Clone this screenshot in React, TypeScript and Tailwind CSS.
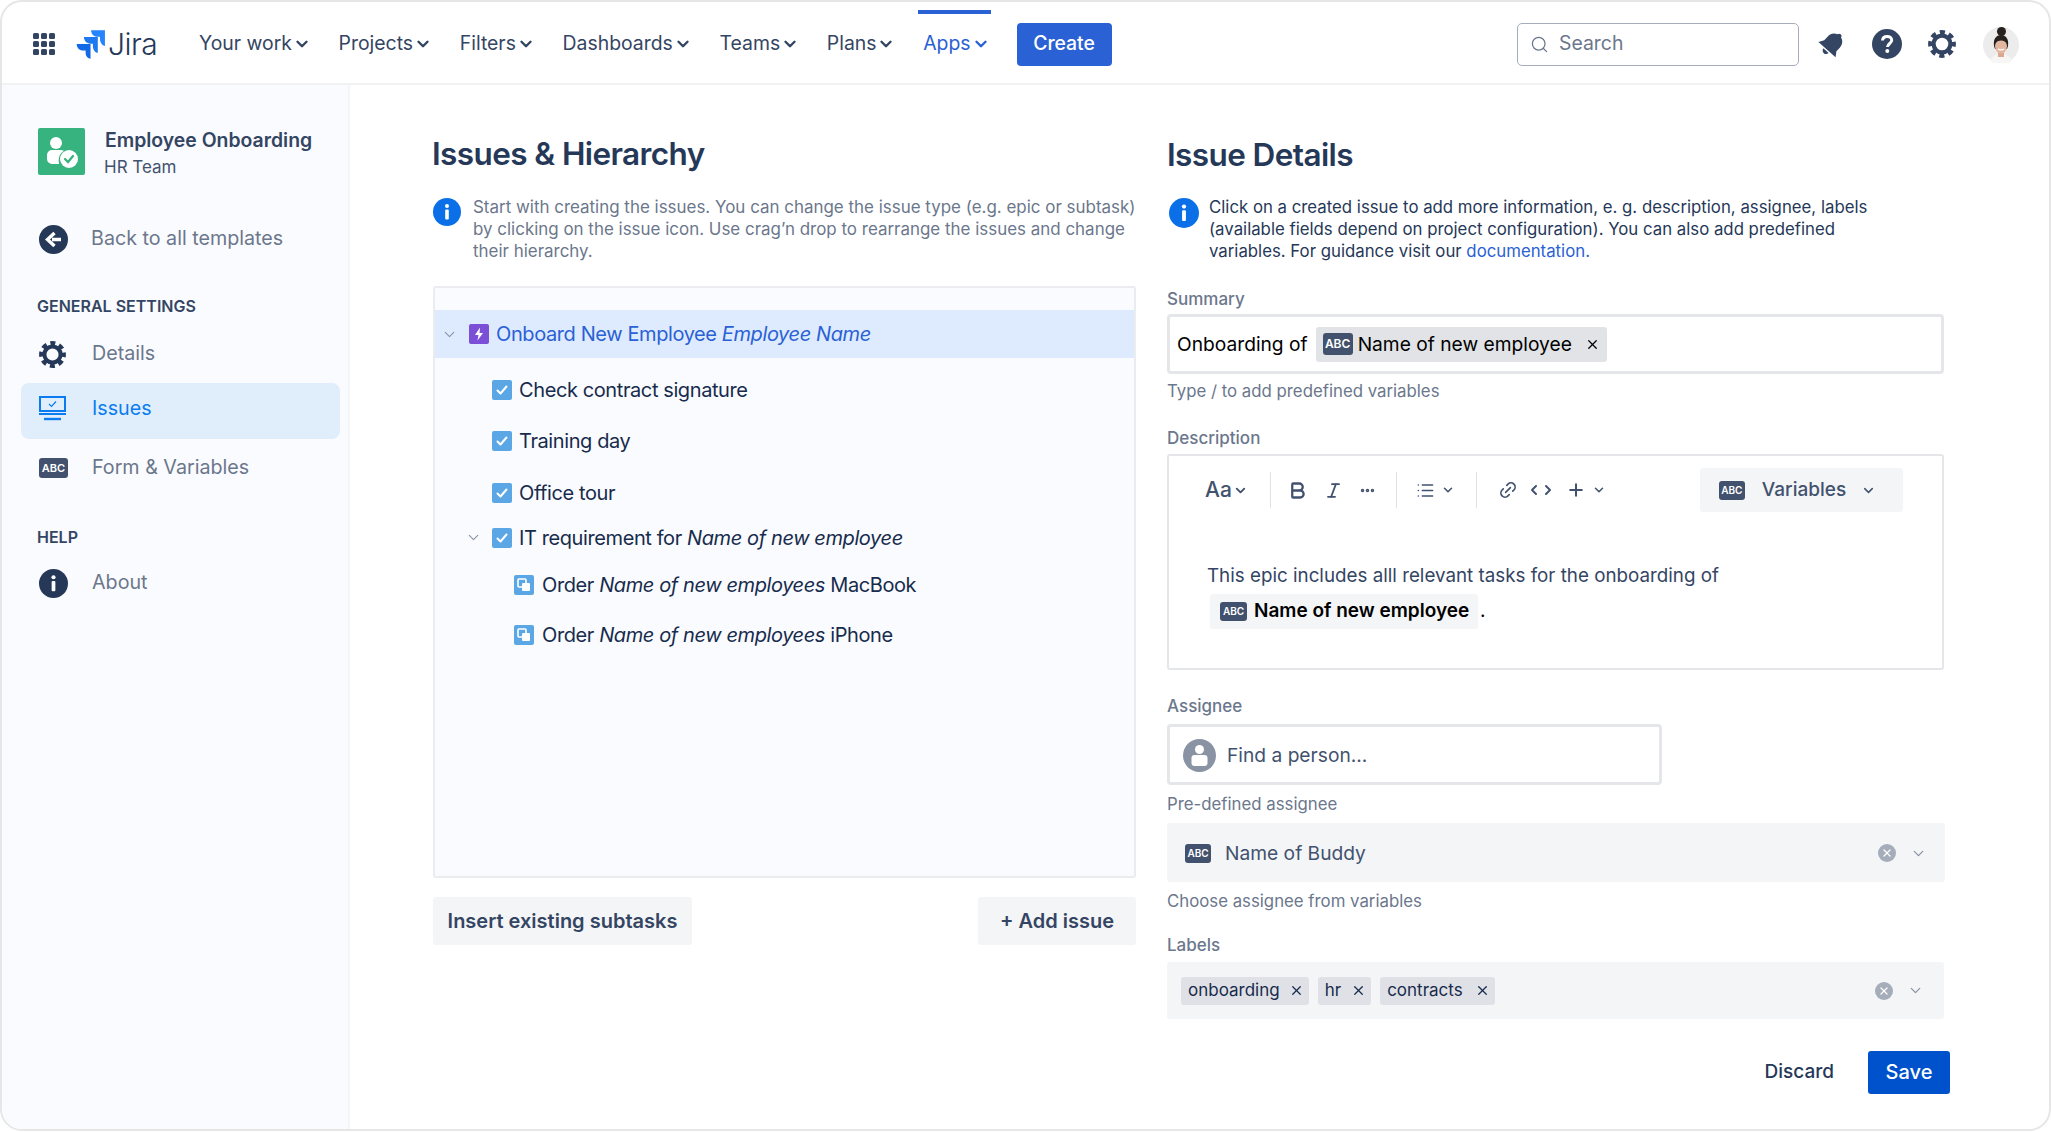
import { ChevronDown, Search, X, Bold, Italic, Link2, Plus, List, MoreHorizontal, ChevronLeft, ChevronRight } from "lucide-react";
import type { ReactNode } from "react";

const navItems = ["Your work", "Projects", "Filters", "Dashboards", "Teams", "Plans"];

function Abc({ className = "" }: { className?: string }) {
  return (
    <span className={`inline-flex items-center justify-center rounded-[3px] bg-[#42526e] font-semibold text-white shrink-0 ${className}`}>
      ABC
    </span>
  );
}

function Gear({ size = 28, color = "#253858" }: { size?: number; color?: string }) {
  return (
    <svg width={size} height={size} viewBox="0 0 28 28" fill="none">
      <circle cx="14" cy="14" r="8.4" stroke={color} strokeWidth="4.2" />
      <circle cx="14" cy="14" r="11.6" stroke={color} strokeWidth="4.6" strokeDasharray="5.1 4" strokeDashoffset="2.5" />
    </svg>
  );
}

function InfoDot({ size = 28, color = "#0b6fe8" }: { size?: number; color?: string }) {
  return (
    <svg width={size} height={size} viewBox="0 0 28 28" className="shrink-0">
      <circle cx="14" cy="14" r="14" fill={color} />
      <circle cx="14" cy="8" r="2" fill="#fff" />
      <rect x="12.2" y="11.5" width="3.6" height="10" rx="1" fill="#fff" />
    </svg>
  );
}

function CheckIcon() {
  return (
    <svg width="20" height="20" viewBox="0 0 20 20" className="shrink-0">
      <rect width="20" height="20" rx="2" fill="#5ba7e6" />
      <path d="M5.5 10.5l3 3 6-7" stroke="#fff" strokeWidth="2" fill="none" strokeLinecap="round" strokeLinejoin="round" />
    </svg>
  );
}

function SubtaskIcon() {
  return (
    <svg width="20" height="20" viewBox="0 0 20 20" className="shrink-0">
      <rect width="20" height="20" rx="2" fill="#5ba7e6" />
      <rect x="4" y="4" width="8" height="8" rx="1" fill="none" stroke="#fff" strokeWidth="1.6" />
      <rect x="8" y="8" width="8" height="8" rx="1" fill="#fff" />
    </svg>
  );
}

function TreeChevron() {
  return <ChevronDown size={17} strokeWidth={1.6} className="text-[#8993a4] shrink-0" />;
}

function TreeRow({ className, children }: { className: string; children: ReactNode }) {
  return <div className={`flex items-center text-[20px] tracking-[-0.4px] text-[#172b4d] ${className}`}>{children}</div>;
}

function NavLink({ icon, label, active }: { icon: ReactNode; label: string; active?: boolean }) {
  return (
    <div className={`flex h-[56px] items-center rounded-[8px] pl-[18px] text-[19.7px] ${active ? "bg-[#e0eefc] pb-[4px] text-[#0b7cf0]" : "text-[#6b778c]"}`}>
      <span className="flex w-[50px] justify-start">{icon}</span>
      <span className="ml-[3px]">{label}</span>
    </div>
  );
}

function Tag({ label, gap }: { label: string; gap: string }) {
  return (
    <span className={`flex h-[28px] items-center rounded-[3px] bg-[#dfe1e6] pl-[7px] pr-[5px] text-[17px] text-[#172b4d] ${gap}`}>
      {label}
      <X size={15} strokeWidth={2} />
    </span>
  );
}

function ClearAndChevron() {
  return (
    <div className="ml-auto flex items-center gap-[14px]">
      <span className="flex h-[18px] w-[18px] items-center justify-center rounded-full bg-[#a5adba] text-white">
        <X size={12} strokeWidth={2.6} />
      </span>
      <ChevronDown size={17} strokeWidth={1.8} className="text-[#8993a4]" />
    </div>
  );
}

function Separator({ className = "" }: { className?: string }) {
  return <span className={`h-[36px] w-px bg-[#dfe1e6] ${className}`} />;
}

export default function App() {
  return (
    <div className="h-[1132px] w-[2051px] overflow-hidden bg-white font-[Inter,sans-serif]">
      <div className="flex h-[1131px] flex-col overflow-hidden rounded-[22px] border-2 border-[#e6e6e6] bg-white">
        {/* top bar */}
        <header className="flex h-[83px] shrink-0 items-center border-b-2 border-[#f1f2f4] pl-[29px] pr-[30px] pt-[3px] text-[19.4px] text-[#344563]">
          <svg width="26" height="26" viewBox="0 0 26 26" fill="#344563" className="shrink-0">
            {[2, 10, 18].map((y) => [2, 10, 18].map((x) => <rect key={`${x}-${y}`} x={x} y={y} width="6" height="6" rx="1.5" />))}
          </svg>
          <svg width="32" height="30" viewBox="0 0 30 28" className="ml-[17px] shrink-0">
            <path d="M29 1H16c0 3.5 2.6 6.2 6 6.2h2.4v2.3c0 3.3 2.3 6 4.6 6.3V1z" fill="#2684ff" />
            <path d="M22.300 7.500H9.300c0 3.500 2.600 6.200 6 6.200h2.400V16c0 3.300 2.300 6 4.600 6.300V7.500z" fill="#1e78f0" />
            <path d="M15.500 14H2.500c0 3.500 2.600 6.200 6 6.200h2.400v2.300c0 3.300 2.300 5 4.600 5.300V14z" fill="#1268e6" />
          </svg>
          <span className="ml-[2px] w-[50px] text-[30px] font-light tracking-[-0.5px] text-[#253858]">Jira</span>
          <nav className="ml-[41px] flex items-center">
            {navItems.map((item) => (
              <span key={item} className="mr-[27.7px] flex items-center">
                {item}
                <ChevronDown size={18} strokeWidth={3.2} className="ml-[1px]" />
              </span>
            ))}
            <span className="relative flex h-[78px] items-center text-[#2a61d4]">
              <span className="absolute -left-[5px] -right-[1px] top-[5px] h-[4px] bg-[#2a61d4]" />
              Apps
              <ChevronDown size={18} strokeWidth={3.2} className="ml-[1px]" />
            </span>
          </nav>
          <button className="ml-[27px] h-[43px] w-[95px] rounded-[4px] bg-[#2a61d4] text-[19.4px] font-medium text-white">Create</button>
          <div className="ml-auto flex h-[43px] w-[282px] items-center rounded-[5px] border border-[#a5adba] pl-[12px] text-[#6b778c]">
            <Search size={19} strokeWidth={1.6} />
            <span className="ml-[10px]">Search</span>
          </div>
          <svg width="30" height="30" viewBox="0 0 30 30" className="ml-[18px] shrink-0" fill="#344563">
            <g transform="rotate(42 15 15)">
              <path d="M15 2c-1.400 0-2.400 1-2.400 2.200C8.800 5.200 6.800 8.600 6.800 12.500v5L3.500 22.500h23l-3.300-5v-5c0-3.900-2-7.300-5.800-8.300C17.400 3 16.400 2 15 2z" />
              <path d="M11.500 24h7c-.3 2-1.700 3.300-3.500 3.300s-3.200-1.300-3.500-3.300z" />
            </g>
          </svg>
          <svg width="30" height="30" viewBox="0 0 30 30" className="ml-[25px] shrink-0">
            <circle cx="15" cy="15" r="15" fill="#344563" />
            <path d="M10.500 11.500c.2-2.500 2.200-4 4.700-4s4.500 1.500 4.500 3.800c0 3.200-4 3.200-4.200 6.700" stroke="#fff" strokeWidth="3" fill="none" />
            <circle cx="15.300" cy="22" r="2" fill="#fff" />
          </svg>
          <span className="ml-[26px]">
            <Gear size={28} color="#344563" />
          </span>
          <svg width="36" height="38" viewBox="0 0 36 38" className="ml-[27px] shrink-0">
            <circle cx="18" cy="20" r="18" fill="#ececec" />
            <path d="M7 36c2-5 6-7 11-7s9 2 11 7a18 18 0 0 1-22 0z" fill="#f8f6f4" />
            <rect x="15" y="25" width="6" height="7" fill="#d9a88d" />
            <path d="M11 21c-1-7 2-11 7-11s8 4 7 11l-1 3H12z" fill="#26201e" />
            <ellipse cx="18" cy="21" rx="6" ry="7.500" fill="#e3b79f" />
            <path d="M12 19c0-4 2.500-6 6-6s6 2 6 6c-1.500-2.500-3.500-3.500-6-3.500s-4.500 1-6 3.500z" fill="#26201e" />
            <circle cx="18.500" cy="6.500" r="4.500" fill="#26201e" />
            <path d="M15 24c1.500 1.200 4.500 1.200 6 0" stroke="#fff" strokeWidth="1.200" fill="none" />
          </svg>
        </header>

        <div className="flex min-h-0 flex-1">
          {/* sidebar */}
          <aside className="w-[348px] shrink-0 border-r-2 border-[#f4f5f7] bg-[#fafbfe] pl-[19px] pr-[8px]">
            <div className="mt-[43px] flex pl-[17px]">
              <svg width="47" height="47" viewBox="0 0 47 47" className="shrink-0">
                <rect width="47" height="47" rx="2" fill="#36b37e" />
                <circle cx="18" cy="15" r="6" fill="#fff" />
                <path d="M9 27a5 5 0 0 1 5-5h9a5 5 0 0 1 3 1c-4 2-6 6-5 13h-7a5 5 0 0 1-5-5z" fill="#fff" />
                <circle cx="31" cy="31" r="9" fill="#fff" />
                <path d="M27 31l3 3 5-6" stroke="#36b37e" strokeWidth="2.200" fill="none" strokeLinecap="round" />
              </svg>
              <div className="ml-[20px] -mt-[3px]">
                <div className="text-[19.4px] font-semibold leading-[30px] text-[#344563]">Employee Onboarding</div>
                <div className="-ml-[1px] text-[17px] leading-[24px] text-[#42526e]">HR Team</div>
              </div>
            </div>
            <div className="mt-[45px] flex h-[30px] items-center pl-[18px] text-[19.7px] text-[#6b778c]">
              <svg width="29" height="29" viewBox="0 0 29 29" className="shrink-0">
                <circle cx="14.500" cy="14.500" r="14.500" fill="#253858" />
                <path d="M22 14.500h-9M15.500 8l-7 6.500 7 6.500" stroke="#fff" strokeWidth="3.400" fill="none" />
              </svg>
              <span className="ml-[23px]">Back to all templates</span>
            </div>
            <div className="mb-[8px] mt-[40px] pl-[16px] text-[16px] font-semibold leading-[24px] text-[#344563]">GENERAL SETTINGS</div>
            <NavLink icon={<Gear size={27} />} label="Details" />
            <div className="mt-[1px]">
              <NavLink
                active
                label="Issues"
                icon={
                  <svg width="27" height="26" viewBox="0 0 27 26" fill="none" stroke="#0b7cf0" strokeWidth="2">
                    <rect x="1" y="1" width="25" height="14" />
                    <path d="M0 18h27" />
                    <path d="M5 23h17" strokeWidth="2.400" />
                    <path d="M10 8l2.500 2.500 4.500-5" strokeWidth="1.200" />
                  </svg>
                }
              />
            </div>
            <div className="mt-[1px]">
              <NavLink icon={<Abc className="h-[20px] w-[29px] text-[11px]" />} label="Form & Variables" />
            </div>
            <div className="mb-[6px] mt-[29px] pl-[16px] text-[16px] font-semibold leading-[24px] text-[#344563]">HELP</div>
            <NavLink icon={<InfoDot size={29} color="#253858" />} label="About" />
          </aside>

          {/* left column */}
          <main className="flex min-w-0 flex-1 pl-[82px]">
            <section className="w-[704px] shrink-0">
              <h1 className="mt-[47px] text-[31.5px] font-semibold leading-[44px] tracking-[-0.6px] text-[#253858]">Issues &amp; Hierarchy</h1>
              <div className="mt-[20px] flex pl-[1px]">
                <span className="mt-[2px]">
                  <InfoDot size={28} />
                </span>
                <p className="ml-[12px] w-[672px] shrink-0 text-[16.95px] leading-[22px] text-[#6b778c]">
                  Start with creating the issues. You can change the issue type (e.g. epic or subtask) by clicking on the issue icon. Use crag’n drop to rearrange the issues and change their hierarchy.
                </p>
              </div>
              <div className="ml-[1px] mt-[24px] h-[592px] rounded-[3px] border-2 border-[#ebecf0] bg-[#fafbfe] pt-[22px]">
                <TreeRow className="h-[48px] bg-[#deebff] pl-[6px]">
                  <TreeChevron />
                  <svg width="20" height="20" viewBox="0 0 20 20" className="ml-[11px] shrink-0">
                    <rect width="20" height="20" rx="2" fill="#7b4fd6" />
                    <path d="M11 3.500L6 11h3.500L8.500 16.500 14 9h-3.500z" fill="#fff" />
                  </svg>
                  <span className="ml-[7px] text-[#2a61d4]">
                    Onboard New Employee <em>Employee Name</em>
                  </span>
                </TreeRow>
                <TreeRow className="mt-[6px] h-[51px] pl-[57px]">
                  <CheckIcon />
                  <span className="ml-[7px]">Check contract signature</span>
                </TreeRow>
                <TreeRow className="h-[51px] pl-[57px]">
                  <CheckIcon />
                  <span className="ml-[7px]">Training day</span>
                </TreeRow>
                <TreeRow className="mt-[1px] h-[51px] pl-[57px]">
                  <CheckIcon />
                  <span className="ml-[7px]">Office tour</span>
                </TreeRow>
                <TreeRow className="h-[39px] pl-[30px]">
                  <TreeChevron />
                  <span className="ml-[10px]">
                    <CheckIcon />
                  </span>
                  <span className="ml-[7px]">
                    IT requirement for <em>Name of new employee</em>
                  </span>
                </TreeRow>
                <TreeRow className="mt-[3px] h-[50px] pl-[79px]">
                  <SubtaskIcon />
                  <span className="ml-[8px]">
                    Order <em>Name of new employees</em> MacBook
                  </span>
                </TreeRow>
                <TreeRow className="mt-[1px] h-[48px] pl-[79px]">
                  <SubtaskIcon />
                  <span className="ml-[8px]">
                    Order <em>Name of new employees</em> iPhone
                  </span>
                </TreeRow>
              </div>
              <div className="ml-[1px] mt-[19px] flex justify-between">
                <button className="h-[48px] w-[259px] rounded-[3px] bg-[#f4f5f7] text-[20px] font-semibold text-[#344563]">Insert existing subtasks</button>
                <button className="h-[48px] w-[158px] rounded-[3px] bg-[#f4f5f7] text-[20px] font-semibold text-[#344563]">+ Add issue</button>
              </div>
            </section>

            {/* right column */}
            <section className="ml-[31px] w-[778px] shrink-0">
              <h1 className="mt-[48px] text-[31.5px] font-semibold leading-[44px] tracking-[-0.6px] text-[#253858]">Issue Details</h1>
              <div className="mt-[19px] flex">
                <span className="ml-[2px] mt-[2px]">
                  <InfoDot size={30} />
                </span>
                <p className="ml-[10px] w-[700px] text-[16.8px] leading-[22px] text-[#253858]">
                  Click on a created issue to add more information, e. g. description, assignee, labels (available fields depend on project configuration). You can also add predefined variables. For guidance visit our <span className="text-[#2a61d4]">documentation.</span>
                </p>
              </div>

              <div className="mt-[25px] text-[17px] font-medium leading-[24px] text-[#6b778c]">Summary</div>
              <div className="mt-[3px] flex h-[60px] w-[777px] items-center whitespace-nowrap rounded-[4px] border-[3px] border-[#e4e6ea] pl-[7px] text-[19.2px] text-[#172b4d]">
                <span className="text-black">Onboarding of</span>
                <span className="ml-[8px] flex h-[35px] w-[291px] items-center rounded-[3px] bg-[#e1e3e6] pl-[7px]">
                  <Abc className="h-[22px] w-[30px] text-[12px]" />
                  <span className="ml-[5px] text-black">Name of new employee</span>
                  <X size={15} strokeWidth={2} className="ml-[13px] text-black" />
                </span>
              </div>
              <div className="mt-[5px] text-[16.8px] leading-[24px] text-[#6b778c]">Type / to add predefined variables</div>

              <div className="mt-[23px] text-[17px] font-medium leading-[24px] text-[#6b778c]">Description</div>
              <div className="mt-[4px] h-[216px] w-[777px] rounded-[3px] border-2 border-[#e4e6ea] pl-[36px]">
                <div className="mt-[12px] flex h-[44px] items-center text-[#42526e]">
                  <span className="text-[21px] font-medium">Aa</span>
                  <ChevronDown size={15} strokeWidth={3} className="ml-[1px]" />
                  <Separator className="ml-[22px]" />
                  <Bold size={21} strokeWidth={2.6} className="ml-[16px]" />
                  <Italic size={19} strokeWidth={2.2} className="ml-[16px]" />
                  <MoreHorizontal size={17} strokeWidth={3} className="ml-[16px]" />
                  <Separator className="ml-[20px]" />
                  <List size={19} strokeWidth={2} className="ml-[19px]" />
                  <ChevronDown size={14} strokeWidth={2.6} className="ml-[6px]" />
                  <Separator className="ml-[21px]" />
                  <Link2 size={20} strokeWidth={2} className="ml-[21px] -rotate-45" />
                  <span className="ml-[8px] flex">
                    <ChevronLeft size={16} strokeWidth={3} className="-mr-[2px]" />
                    <ChevronRight size={16} strokeWidth={3} />
                  </span>
                  <Plus size={20} strokeWidth={2.4} className="ml-[10px]" />
                  <ChevronDown size={14} strokeWidth={2.6} className="ml-[6px]" />
                  <span className="ml-[94px] flex h-[44px] w-[203px] items-center rounded-[3px] bg-[#f4f5f7] pl-[19px] text-[19px] font-medium">
                    <Abc className="h-[19px] w-[26px] text-[10px]" />
                    <span className="ml-[17px]">Variables</span>
                    <ChevronDown size={15} strokeWidth={2.4} className="ml-[15px]" />
                  </span>
                </div>
                <div className="ml-[2px] mt-[51px] text-[18.8px] leading-[26px] text-[#344563]">This epic includes alll relevant tasks for the onboarding of</div>
                <div className="mt-[5px] flex items-center text-black">
                  <span className="ml-[5px] flex h-[35px] w-[268px] items-center rounded-[3px] bg-[#f4f5f7] pl-[10px] text-[19px] font-semibold">
                    <Abc className="h-[19px] w-[27px] text-[10px]" />
                    <span className="ml-[7px]">Name of new employee</span>
                  </span>
                  <span className="ml-[2px] text-[19px]">.</span>
                </div>
              </div>

              <div className="mt-[24px] text-[17px] font-medium leading-[24px] text-[#6b778c]">Assignee</div>
              <div className="mt-[6px] flex h-[61px] w-[495px] items-center rounded-[4px] border-[3px] border-[#e4e6ea] pl-[13px] pt-[1px] text-[19.2px] text-[#42526e]">
                <svg width="33" height="33" viewBox="0 0 33 33" className="shrink-0">
                  <circle cx="16.500" cy="16.500" r="16.500" fill="#8993a4" />
                  <circle cx="16.500" cy="10.500" r="4.500" fill="#fff" />
                  <rect x="8.500" y="16" width="16" height="11" rx="3" fill="#fff" />
                </svg>
                <span className="ml-[11px]">Find a person...</span>
              </div>
              <div className="mt-[7px] text-[16.8px] leading-[24px] text-[#6b778c]">Pre-defined assignee</div>
              <div className="mt-[7px] flex h-[59px] items-center rounded-[3px] bg-[#f4f5f7] pl-[18px] pr-[18px] pt-[1px] text-[19.2px] text-[#42526e]">
                <Abc className="h-[19px] w-[26px] text-[10px]" />
                <span className="ml-[14px]">Name of Buddy</span>
                <ClearAndChevron />
              </div>
              <div className="mt-[7px] text-[16.8px] leading-[24px] text-[#6b778c]">Choose assignee from variables</div>
              <div className="mt-[20px] text-[17px] font-medium leading-[24px] text-[#6b778c]">Labels</div>
              <div className="mt-[5px] flex h-[57px] w-[777px] items-center gap-[9px] rounded-[3px] bg-[#f4f5f7] pl-[14px] pr-[20px]">
                <Tag label="onboarding" gap="gap-[9px]" />
                <Tag label="hr" gap="gap-[10px]" />
                <Tag label="contracts" gap="gap-[12px]" />
                <ClearAndChevron />
              </div>
              <div className="-mr-[5px] mt-[32px] flex items-center justify-end">
                <span className="text-[19px] font-medium text-[#253858]">Discard</span>
                <button className="ml-[34px] h-[43px] w-[82px] rounded-[3px] bg-[#0052cc] pb-[2px] text-[20px] font-medium text-white">Save</button>
              </div>
            </section>
          </main>
        </div>
      </div>
    </div>
  );
}
